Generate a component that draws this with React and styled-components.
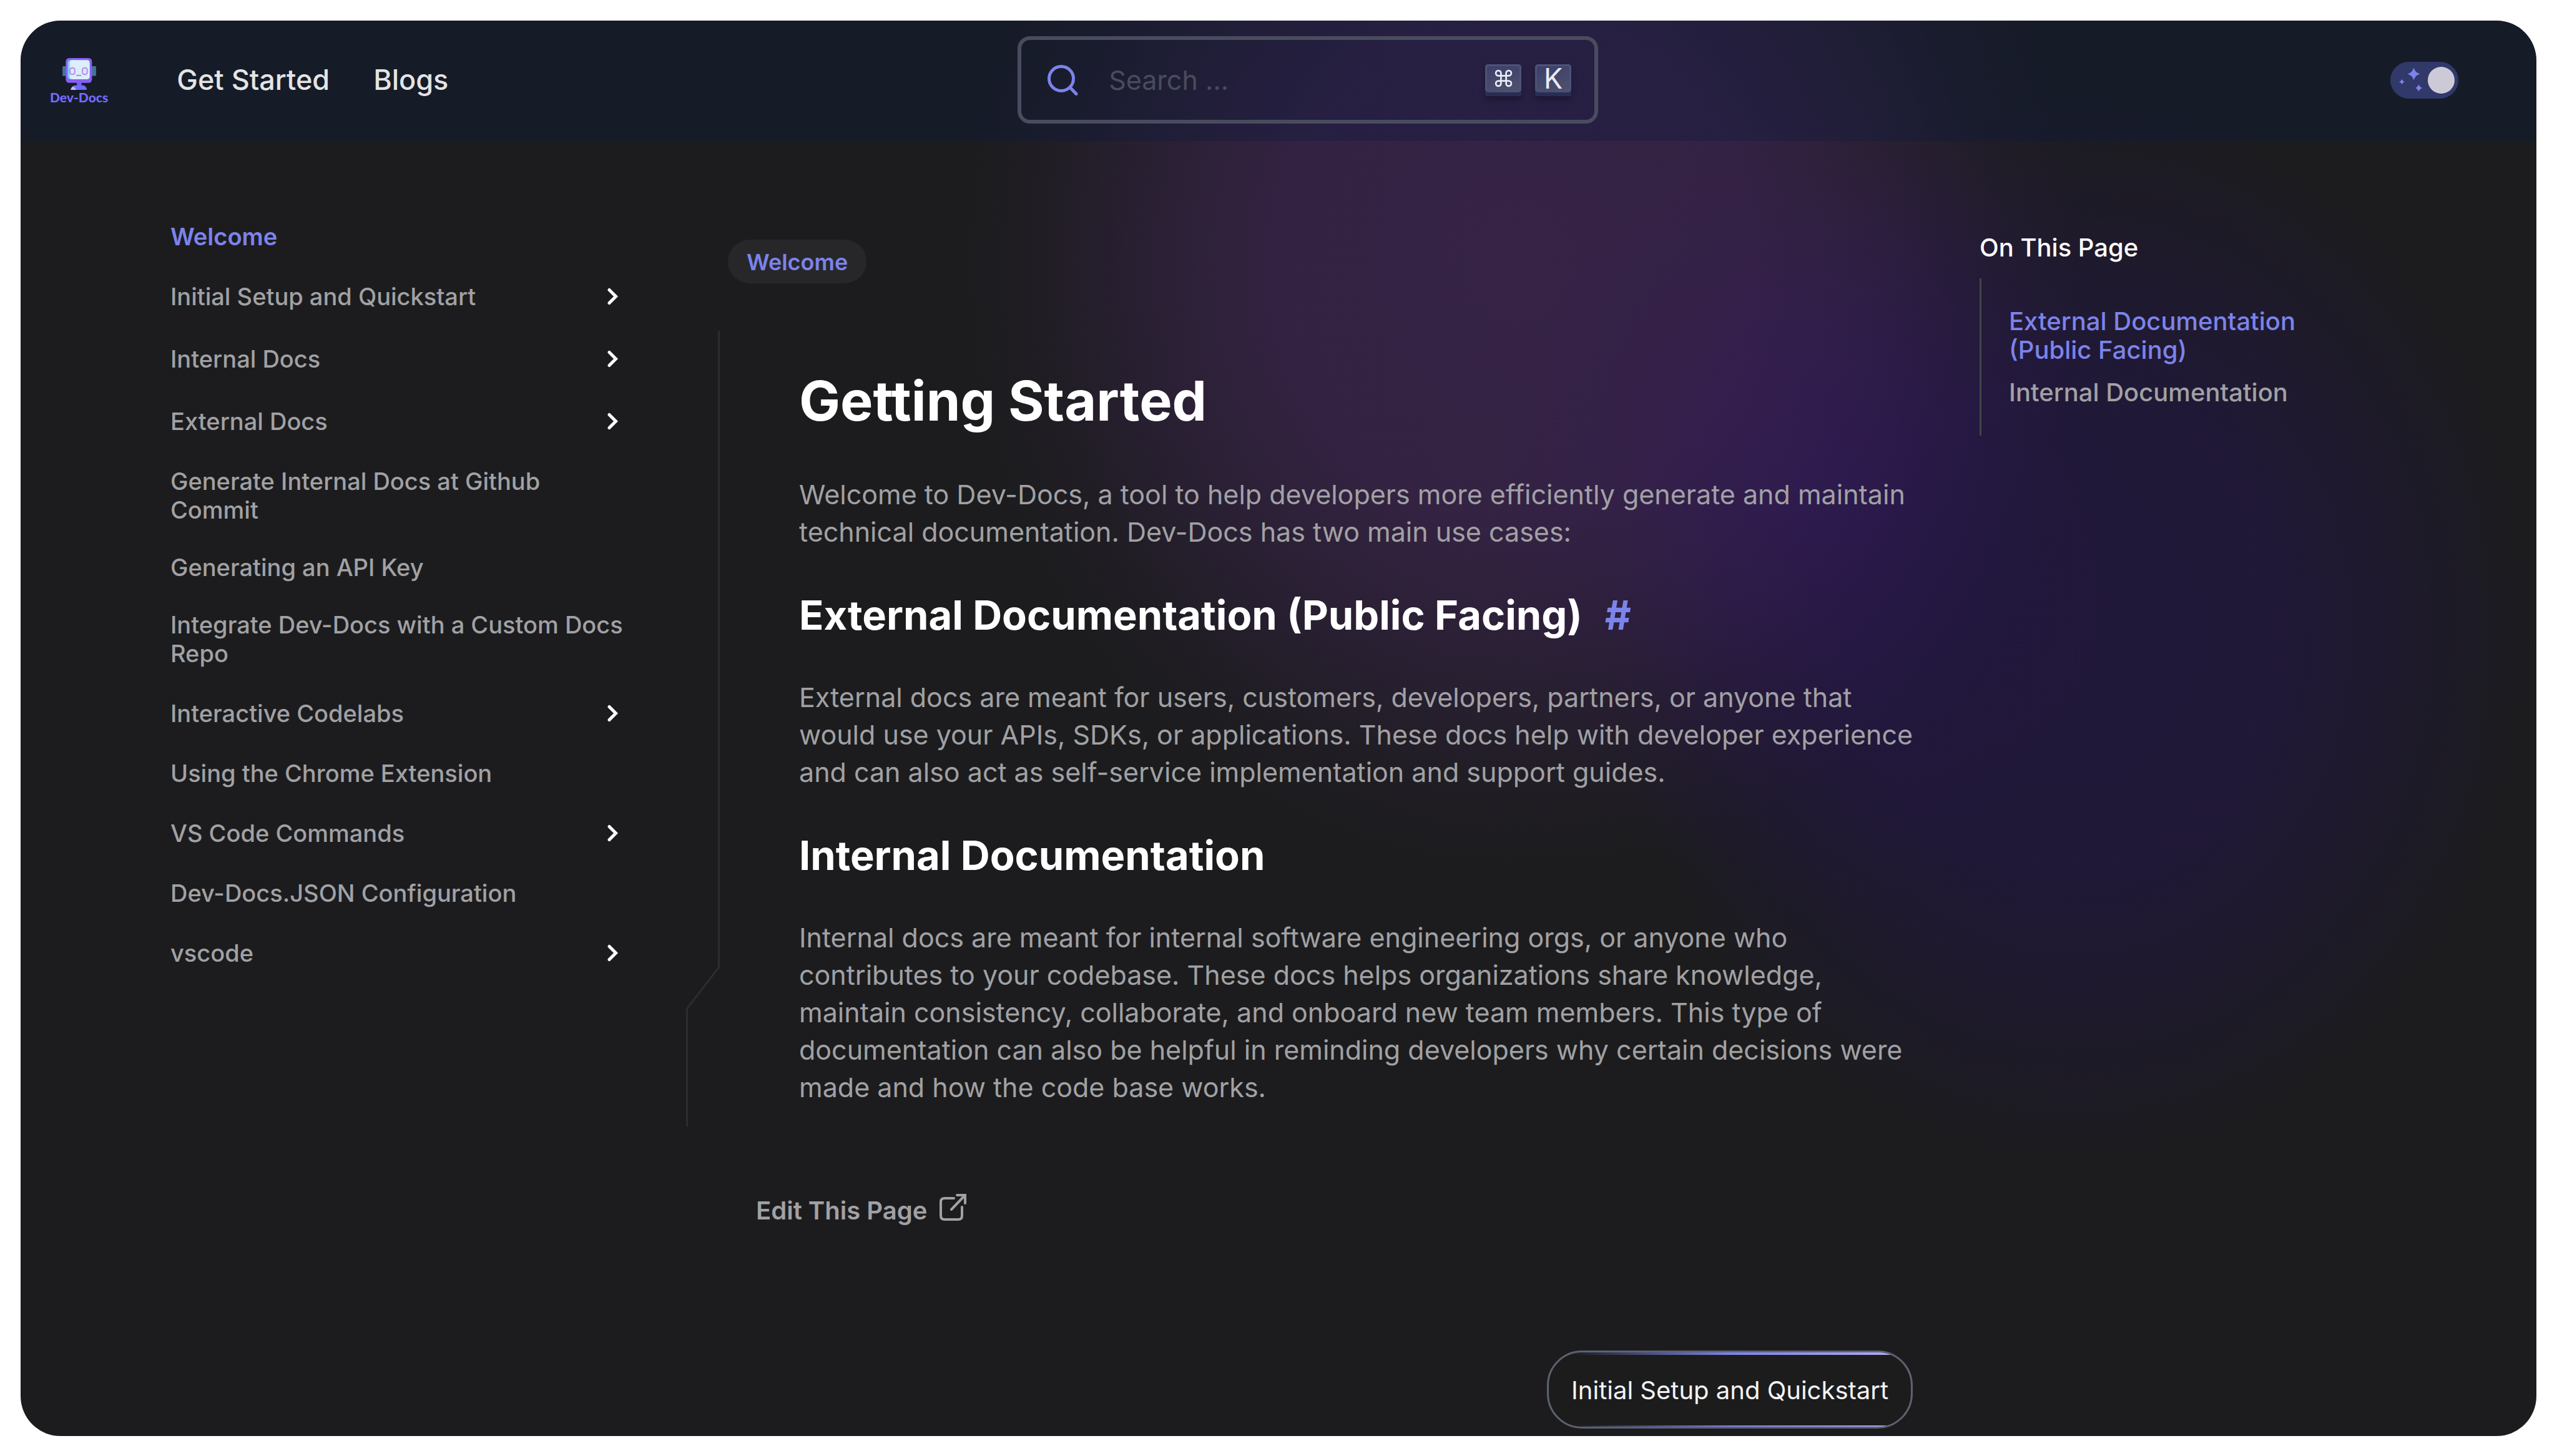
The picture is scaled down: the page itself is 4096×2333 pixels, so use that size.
import React from "react";
import styled, { createGlobalStyle } from "styled-components";
import { Command } from "lucide-react";

const color = {
  base: "#1c1c1e",
  accent: "#7c83ea",
  muted: "#a1a1a4",
  line: "#2c2c2f",
};

const sheen = "linear-gradient(90deg, rgba(124, 131, 234, 0) 6%, #7c83ea 50%, #b0a8f4 96%)";

const GlobalStyle = createGlobalStyle`
  *, *::before, *::after { box-sizing: border-box; }
  body {
    margin: 0;
    padding: 33px;
    background: #fff;
    color: ${color.muted};
    font-family: "Inter", "Liberation Sans", sans-serif;
  }
  a { color: inherit; text-decoration: none; }
  h1, h2, p, ul { margin: 0; padding: 0; }
  ul { list-style: none; }
  button { font: inherit; color: inherit; background: none; border: 0; padding: 0; cursor: pointer; }
  svg { display: block; flex: none; }
`;

const Frame = styled.div`
  min-height: calc(100vh - 66px);
  border-radius: 64px;
  overflow: hidden;
  background:
    radial-gradient(ellipse 500px 660px at 2860px 780px, rgba(52, 14, 118, 0.2), rgba(52, 14, 118, 0.15) 35%, rgba(52, 14, 118, 0.06) 72%, rgba(52, 14, 118, 0) 100%),
    radial-gradient(ellipse 900px 980px at 2400px 390px, rgba(121, 53, 173, 0.28), rgba(121, 53, 173, 0.26) 42%, rgba(121, 53, 173, 0.14) 68%, rgba(121, 53, 173, 0.04) 86%, rgba(121, 53, 173, 0) 100%),
    radial-gradient(ellipse 740px 860px at 3290px 980px, rgba(36, 20, 82, 0.54), rgba(36, 20, 82, 0.46) 48%, rgba(36, 20, 82, 0.24) 74%, rgba(36, 20, 82, 0) 100%),
    ${color.base};
`;

/* ---------- header ---------- */

const Header = styled.header`
  display: flex;
  align-items: center;
  padding: 25px 125px 28px 47px;
  background: rgba(9, 25, 65, 0.31);
`;

const HeaderStart = styled.div`
  flex: 9 1 0;
  display: flex;
  align-items: center;
  gap: 110px;
`;

const HeaderEnd = styled.div`
  flex: 8 1 0;
  display: flex;
  justify-content: flex-end;
`;

const Logo = styled.a`
  display: flex;
  flex-direction: column;
  align-items: center;
  padding-top: 4px;
  color: #736bff;
  font: 900 21px/24px "Lato", sans-serif;
`;

const Nav = styled.nav`
  display: flex;
  gap: 70px;
  color: #e4e4e4;
  font-size: 45px;
  font-weight: 500;
  line-height: 56px;
`;

const SearchBox = styled.label`
  flex: 0 1 930px;
  min-width: 0;
  display: flex;
  align-items: center;
  height: 140px;
  padding: 0 37px 0 42px;
  border: 6px solid #494c5e;
  border-radius: 20px;
`;

const SearchInput = styled.input`
  flex: 1;
  min-width: 0;
  margin-left: 49px;
  padding: 0;
  border: 0;
  outline: 0;
  background: none;
  color: #e4e4e4;
  font: 400 43px/56px "Inter", sans-serif;
  &::placeholder { color: #484c5c; opacity: 1; }
`;

const Keys = styled.span`
  display: flex;
  gap: 22px;
`;

const Key = styled.kbd`
  display: flex;
  align-items: center;
  justify-content: center;
  width: 58px;
  height: 51px;
  padding-bottom: 6px;
  border-radius: 5px;
  color: #e9ebf3;
  font: 400 45px/45px "Inter", sans-serif;
  background: linear-gradient(165deg, #3a3e68, #545470);
  box-shadow: inset 0 -6px 0 #282d55, inset 0 0 0 3px #4d5278, 0 6px 8px rgba(20, 14, 34, 0.5);
`;

const Toggle = styled.button`
  display: flex;
  align-items: center;
  justify-content: space-between;
  width: 109px;
  height: 59px;
  padding: 0 6px 0 14px;
  border-radius: 30px;
  background: #31386a;
`;

const Knob = styled.span`
  width: 43px;
  height: 43px;
  border-radius: 50%;
  background: #cdcad8;
`;

/* ---------- page body ---------- */

const Page = styled.div`
  display: grid;
  grid-template-columns: 730px minmax(0, 1fr) 520px;
  column-gap: 96px;
  align-items: start;
  padding: 0 372px 0 240px;
`;

const SideNav = styled.ul`
  padding-top: 107px;
  font-size: 38px;
  font-weight: 500;
  line-height: 46px;
`;

const SideItem = styled.li`
  display: flex;
  align-items: center;
  justify-content: space-between;
  padding: ${(p) => (p.$branch ? "27px 13px 27px 0" : "23px 0")};
  color: ${(p) => (p.$active ? color.accent : "inherit")};
  font-weight: ${(p) => (p.$active ? 600 : 500)};
`;

const Main = styled.main`
  display: flex;
  flex-direction: column;
  align-items: flex-start;
  padding: 158px 0 12px;
`;

const Crumb = styled.a`
  margin-left: 67px;
  padding: 11px 30px 9px;
  border-radius: 35px;
  background: #27272a;
  color: ${color.accent};
  font-size: 36px;
  font-weight: 600;
  line-height: 50px;
`;

const ArticleRow = styled.div`
  display: flex;
  align-self: stretch;
  margin-top: 76px;
`;

const Rail = styled.div`
  flex: 0 0 54px;
  display: flex;
  flex-direction: column;
`;

const RailUpper = styled.div`
  flex: 1;
  border-right: 3px solid ${color.line};
`;

const RailLower = styled.div`
  height: 189px;
  border-left: 3px solid ${color.line};
`;

const Article = styled.article`
  flex: 1;
  min-width: 0;
  padding: 58px 0 33px 127px;
`;

const Title = styled.h1`
  margin-bottom: 66px;
  color: #fff;
  font-size: 88px;
  font-weight: 700;
  line-height: 108px;
`;

const Section = styled.h2`
  margin: 66px 0 63px;
  color: #fff;
  font-size: 65px;
  font-weight: 700;
  line-height: 76px;
`;

const Anchor = styled.a`
  margin-left: 36px;
  color: ${color.accent};
`;

const Text = styled.p`
  font-size: 43px;
  line-height: 60px;
`;

const EditLink = styled.a`
  display: flex;
  align-items: flex-start;
  gap: 20px;
  margin: 108px 0 0 112px;
  font-size: 40px;
  font-weight: 600;
  line-height: 54px;
`;

const NextLink = styled.a`
  align-self: flex-end;
  margin: 197px 11px 0 0;
  padding: 33px 36px 30px;
  border: 3px solid #5d626f;
  border-radius: 56px;
  background: ${sheen} top / 100% 4px no-repeat, ${sheen} bottom / 100% 2px no-repeat, #1c1c1d;
  color: #f4f4f5;
  font-size: 40px;
  line-height: 56px;
`;

const Toc = styled.aside`
  padding-top: 146px;
  font-weight: 500;
`;

const TocTitle = styled.p`
  color: #fff;
  font-size: 40px;
  line-height: 50px;
`;

const TocList = styled.ul`
  display: flex;
  flex-direction: column;
  gap: 22px;
  margin-top: 24px;
  padding: 46px 0 46px 44px;
  border-left: 3px solid #434548;
  font-size: 40px;
  line-height: 46px;
`;

const TocItem = styled.li`
  color: ${(p) => (p.$active ? color.accent : "inherit")};
`;

/* ---------- drawings ---------- */

const Robot = () => (
  <svg width="54" height="51" viewBox="0 0 197 187" aria-hidden="true">
    <rect x="0" y="48" width="197" height="57" fill="#45739b" />
    <path d="M84 140h28v22h-28z" fill="#6c63f5" />
    <path d="M48 187c2-18 14-27 30-27h38c16 0 25 9 27 27z" fill="#736bff" />
    <path d="M48 187c2-12 10-18 18-18l16 18z" fill="#c3bdf6" />
    <rect x="19" y="0" width="154" height="146" rx="20" fill="#8660f3" />
    <rect x="30" y="12" width="60" height="113" rx="16" fill="#7cc9f5" />
    <rect x="42" y="12" width="118" height="113" rx="16" fill="#dceef9" />
    <g fill="none" stroke="#b394f0" strokeWidth="8">
      <rect x="44" y="58" width="28" height="38" rx="12" />
      <rect x="117" y="58" width="28" height="38" rx="12" />
      <path d="M80 102h30" />
    </g>
  </svg>
);

const SearchGlyph = () => (
  <svg width="49" height="49" viewBox="0 0 49 49" fill="none" stroke={color.accent} strokeWidth="5" strokeLinecap="round" aria-hidden="true">
    <circle cx="22" cy="22" r="19.5" />
    <path d="M36 36l10 10.5" />
  </svg>
);

const Sparkles = () => (
  <svg width="38" height="38" viewBox="0 0 38 38" fill={color.accent} aria-hidden="true">
    <path d="M23.500 0.500q2 7 9 9q-7 2-9 9q-2-7-9-9q7-2 9-9z" stroke={color.accent} strokeLinejoin="round" />
    <path d="M4.500 17.500q1 3.500 4.500 4.500q-3.500 1-4.500 4.500q-1-3.500-4.500-4.500q3.500-1 4.500-4.500z" />
    <path d="M31.500 26q1.300 4.700 6 6q-4.700 1.300-6 6q-1.300-4.700-6-6q4.700-1.300 6-6z" />
  </svg>
);

const Chevron = () => (
  <svg width="18" height="28" viewBox="0 0 18 28" fill="none" stroke="#fff" strokeWidth="5" strokeLinecap="round" aria-hidden="true">
    <path d="M4 3.500L14.500 14L4 24.500" />
  </svg>
);

const RailBend = () => (
  <svg width="54" height="66" viewBox="0 0 54 66" fill="none" stroke={color.line} strokeWidth="3" aria-hidden="true">
    <path d="M52.500 0L1.500 66" />
  </svg>
);

const OpenGlyph = () => (
  <svg width="43" height="43" viewBox="0 0 43 43" fill="none" stroke={color.muted} strokeWidth="4" strokeLinecap="round" aria-hidden="true">
    <path d="M23 7H8q-6 0-6 6v22q0 6 6 6h22q6 0 6-6V21" />
    <path d="M19 25L40 3M28 2h13v13" />
  </svg>
);

/* ---------- content ---------- */

const sideItems = [
  { label: "Welcome", active: true },
  { label: "Initial Setup and Quickstart", branch: true },
  { label: "Internal Docs", branch: true },
  { label: "External Docs", branch: true },
  { label: "Generate Internal Docs at Github Commit" },
  { label: "Generating an API Key" },
  { label: "Integrate Dev-Docs with a Custom Docs Repo" },
  { label: "Interactive Codelabs", branch: true },
  { label: "Using the Chrome Extension" },
  { label: "VS Code Commands", branch: true },
  { label: "Dev-Docs.JSON Configuration" },
  { label: "vscode", branch: true },
];

export default function App() {
  return (
    <>
      <GlobalStyle />
      <Frame>
        <Header>
          <HeaderStart>
            <Logo href="#home">
              <Robot />
              Dev-Docs
            </Logo>
            <Nav aria-label="Main">
              <a href="#get-started">Get Started</a>
              <a href="#blogs">Blogs</a>
            </Nav>
          </HeaderStart>
          <SearchBox>
            <SearchGlyph />
            <SearchInput type="search" aria-label="Search" placeholder="Search ..." />
            <Keys>
              <Key><Command size={33} strokeWidth={2} /></Key>
              <Key>K</Key>
            </Keys>
          </SearchBox>
          <HeaderEnd>
            <Toggle type="button" role="switch" aria-checked="true" aria-label="Dark mode">
              <Sparkles />
              <Knob />
            </Toggle>
          </HeaderEnd>
        </Header>

        <Page>
          <nav aria-label="Docs">
            <SideNav>
              {sideItems.map(({ label, active, branch }) => (
                <SideItem key={label} $active={active} $branch={branch}>
                  <a href="#doc">{label}</a>
                  {branch && (
                    <button type="button" aria-label={`Expand ${label}`}>
                      <Chevron />
                    </button>
                  )}
                </SideItem>
              ))}
            </SideNav>
          </nav>

          <Main>
            <Crumb href="#welcome">Welcome</Crumb>
            <ArticleRow>
              <Rail>
                <RailUpper />
                <RailBend />
                <RailLower />
              </Rail>
              <Article>
                <Title>Getting Started</Title>
                <Text>
                  Welcome to Dev-Docs, a tool to help developers more efficiently generate and maintain technical
                  documentation. Dev-Docs has two main use cases:
                </Text>
                <Section id="external">
                  External Documentation (Public Facing)<Anchor href="#external">#</Anchor>
                </Section>
                <Text>
                  External docs are meant for users, customers, developers, partners, or anyone that would use your
                  APIs, SDKs, or applications. These docs help with developer experience and can also act as
                  self-service implementation and support guides.
                </Text>
                <Section id="internal">Internal Documentation</Section>
                <Text>
                  Internal docs are meant for internal software engineering orgs, or anyone who contributes to your
                  codebase. These docs helps organizations share knowledge, maintain consistency, collaborate, and
                  onboard new team members. This type of documentation can also be helpful in reminding developers why
                  certain decisions were made and how the code base works.
                </Text>
              </Article>
            </ArticleRow>
            <EditLink href="#edit">
              Edit This Page
              <OpenGlyph />
            </EditLink>
            <NextLink href="#next">Initial Setup and Quickstart</NextLink>
          </Main>

          <Toc>
            <TocTitle>On This Page</TocTitle>
            <TocList>
              <TocItem $active><a href="#external">External Documentation (Public Facing)</a></TocItem>
              <TocItem><a href="#internal">Internal Documentation</a></TocItem>
            </TocList>
          </Toc>
        </Page>
      </Frame>
    </>
  );
}
